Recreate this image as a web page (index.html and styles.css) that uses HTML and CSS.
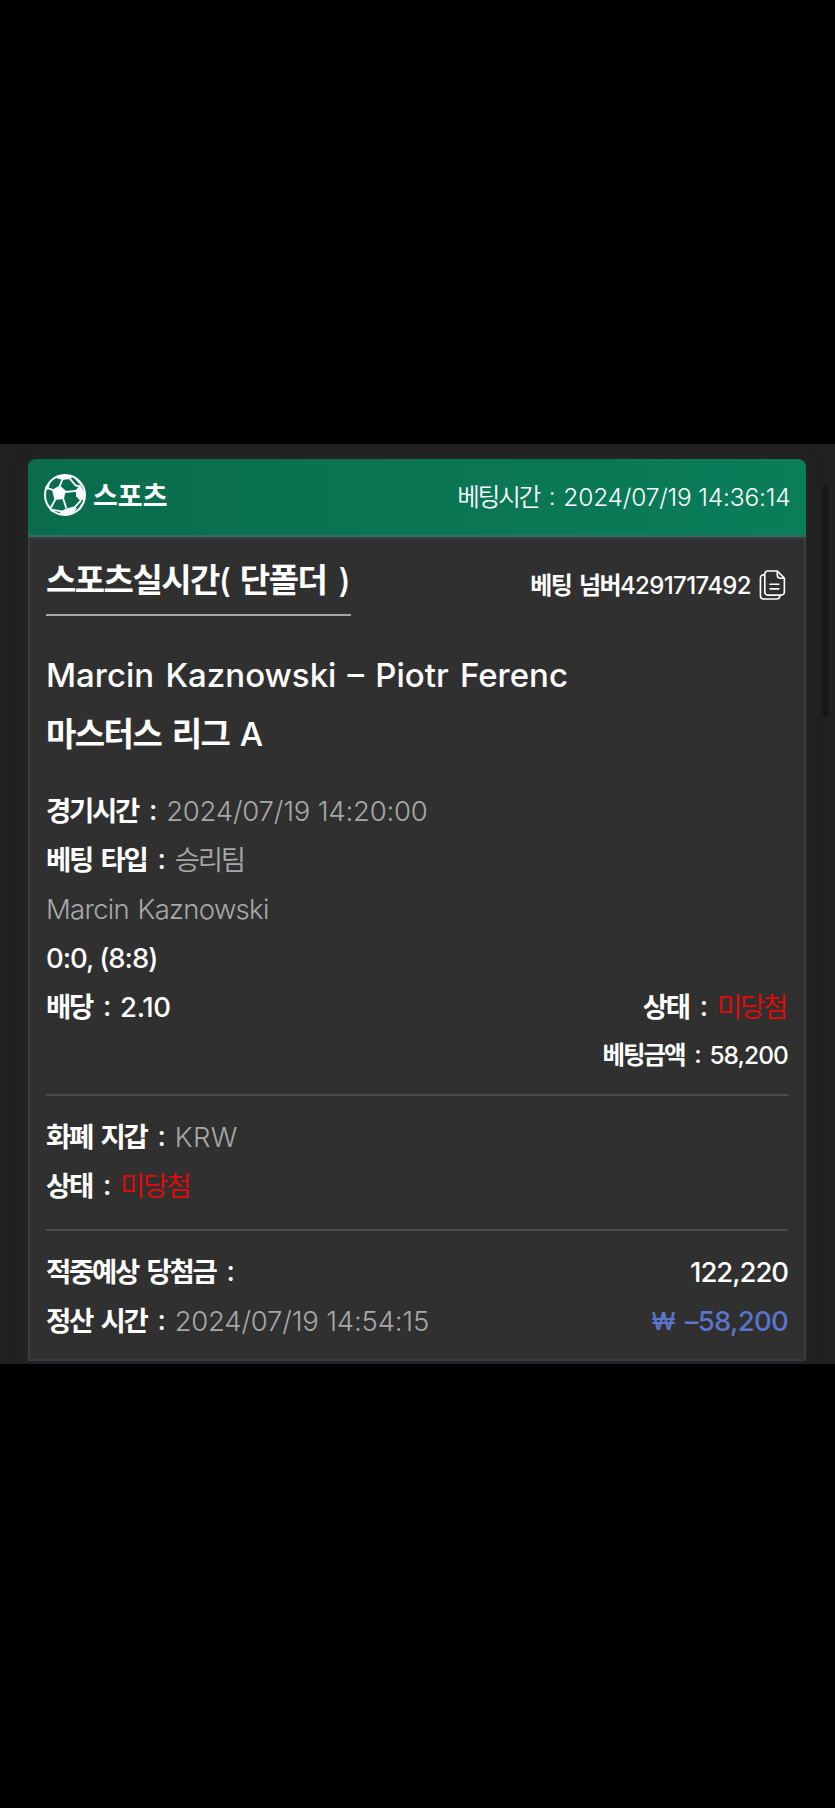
FILE: index.html
```html
<!DOCTYPE html>
<html lang="ko">
<head>
<meta charset="utf-8">
<title>스포츠</title>
<link rel="stylesheet" href="styles.css">
</head>
<body>
<main class="screen">
  <article class="card">
    <header class="card-head">
      <div class="brand">
        <svg class="ball" viewBox="0 0 124 124" aria-hidden="true">
          <circle cx="62" cy="62" r="59" fill="none" stroke="#fff" stroke-width="6"/>
          <g fill="#fff">
            <path d="M24 47 46 34 64 49 59 74 31 77Z"/>
            <path d="M94 47 107 32 121 55 119 74 108 80 95 66Z"/>
            <path d="M30 12 58 2 85 8 76 15 54 18 34 11Z"/>
            <path d="M62 103 88 96 97 102 88 114 62 122 44 116Z"/>
            <path d="M2 52 12 44 18 28 5 36Z"/>
            <path d="M6 86 21 98 28 110 44 120 20 110Z"/>
            <path d="M86 8 106 22 112 36 100 24Z"/>
            <path d="M119 76 108 104 98 110 108 92Z"/>
          </g>
          <g fill="none" stroke="#fff" stroke-width="5.500">
            <path d="M54 17 46 37M62 53 96 50M57 74 66 101M33 76 21 98M26 47 10 42M76 14 94 34 106 36M108 79 91 98M26 106 62 112"/>
          </g>
        </svg>
        <span class="brand-name">스포츠</span>
      </div>
      <div class="bet-time"><span class="ko">베팅시간</span><span class="colon">:</span><span class="stamp">2024/07/19 14:36:14</span></div>
    </header>
    <div class="card-body">
      <div class="title-row">
        <h1 class="title"><span class="ko">스포츠실시간</span><span>( </span><span class="ko">단폴더</span><span class="close"> )</span></h1>
        <div class="bet-no">
          <span class="ko">베팅 넘버</span><span class="num">4291717492</span>
          <svg class="copy" viewBox="0 0 28 32" fill="none" stroke="#fff" stroke-width="1.7" stroke-linejoin="round" stroke-linecap="round" aria-hidden="true">
            <path d="M9 1.5H19L26.3 8.8V23.500a3 3 0 0 1-3 3H9a3 3 0 0 1-3-3V4.500a3 3 0 0 1 3-3ZM19 1.700V6a3 3 0 0 0 3 3H26.200M6 5.500H4.500a3 3 0 0 0-3 3V27.500a3 3 0 0 0 3 3H18.500a3 3 0 0 0 3-3V27M11.500 15.200H20.500M11.500 20H20.500"/>
          </svg>
        </div>
      </div>
      <div class="match">
        <p class="players">Marcin Kaznowski – Piotr Ferenc</p>
        <p class="ko league">마스터스 리그 <span class="grade">A</span></p>
      </div>
      <dl class="rows">
        <div><dt class="ko">경기시간</dt><dt class="colon">:</dt><dd class="stamp">2024/07/19 14:20:00</dd></div>
        <div><dt class="ko">베팅 타입</dt><dt class="colon">:</dt><dd class="ko">승리팀</dd></div>
        <div><dd class="pick">Marcin Kaznowski</dd></div>
        <div><dt class="num">0:0, (8:8)</dt></div>
        <div><dt class="ko">배당</dt><dt class="colon">:</dt><dt class="odds">2.10</dt>
          <span class="end status"><span class="ko">상태</span><span class="colon">:</span><span class="ko lost">미당첨</span></span></div>
        <div class="small"><span class="end"><span class="ko">베팅금액</span><span class="colon">:</span><span class="num">58,200</span></span></div>
      </dl>
      <dl class="rows ruled">
        <div><dt class="ko">화폐 지갑</dt><dt class="colon">:</dt><dd class="currency">KRW</dd></div>
        <div><dt class="ko">상태</dt><dt class="colon">:</dt><dd class="ko lost">미당첨</dd></div>
      </dl>
      <dl class="rows ruled">
        <div><dt class="ko">적중예상 당첨금</dt><dt class="colon">:</dt><dt class="end num">122,220</dt></div>
        <div><dt class="ko">정산 시간</dt><dt class="colon">:</dt><dd class="stamp">2024/07/19 14:54:15</dd><dt class="end loss"><span class="won">₩</span><span class="minus">–58,200</span></dt></div>
      </dl>
    </div>
  </article>
  <div class="scrollbar"></div>
</main>
</body>
</html>
```
FILE: styles.css
```css
* { box-sizing: border-box; }
body {
  margin: 0;
  min-height: 1808px;
  padding-top: 444px;
  background: #000;
  color: #fff;
  font-family: Inter, "Noto Sans CJK KR", sans-serif;
  font-weight: 500;
}
h1, p, dl, dt, dd { margin: 0; font-weight: inherit; }
.screen {
  position: relative;
  height: 920px;
  padding: 14.5px 29px 0 28px;
  background: #212121;
  overflow: hidden;
}
.ko { font-weight: 600; letter-spacing: -.083em; word-spacing: .14em; }
.num { letter-spacing: -.038em; }
.stamp { letter-spacing: -.007em; }
.card { box-shadow: 0 0 14px rgba(45, 45, 55, .5); border-radius: 8px 8px 0 0; }
.card-head {
  display: flex;
  justify-content: space-between;
  align-items: center;
  height: 78.500px;
  padding: 0 15.500px 0 16px;
  border-bottom: 2px solid #2f6e69;
  border-radius: 8px 8px 0 0;
  background: linear-gradient(90deg, #0a6c4d, #0a7d59);
}
.brand { display: flex; align-items: center; gap: 7px; }
.ball { width: 42px; height: 42px; margin-bottom: 4px; }
.brand-name { font-size: 27px; font-weight: 600; line-height: 40px; }
.bet-time {
  display: flex;
  align-items: baseline;
  font-size: 24.500px;
  font-weight: 300;
  line-height: 40px;
}
.bet-time .ko { font-weight: 350; }
.bet-time .colon { width: 24px; }
.card-body {
  height: 824px;
  padding: 0 16px;
  border: 2px solid #3b3c40;
  background: #303030;
}
.title-row { display: flex; justify-content: space-between; align-items: flex-start; height: 78px; }
.title {
  height: 77px;
  padding-top: 16px;
  border-bottom: 2px solid #a5a5a5;
  font-size: 33px;
  line-height: 50px;
  white-space: pre;
}
.title .ko { letter-spacing: -.047em; }
.close { word-spacing: 3.500px; }
.bet-no {
  display: flex;
  align-items: center;
  height: 60px;
  margin-top: 17px;
  padding-right: 2px;
  font-size: 24px;
  line-height: 40px;
}
.bet-no .ko { letter-spacing: -.066em; }
.bet-no .num { letter-spacing: -.026em; }
.copy { width: 27px; height: 32px; margin: 0 0 2px 8px; }
.match { padding-top: 29px; font-size: 33px; line-height: 58.500px; }
.players { word-spacing: 2.400px; }
.league { letter-spacing: -.047em; word-spacing: .11em; }
.grade { font-weight: 500; }
.rows { padding: 24px 0 14px; font-size: 27.500px; line-height: 49px; }
.rows > div { display: flex; height: 49px; }
.rows dd { color: #a8a8a8; font-weight: 300; }
.rows dd.ko { font-weight: 350; }
.ruled { padding: 17px 0 18px; border-top: 2px solid #4b4b4b; }
.colon { width: 1.020em; padding-left: .080em; text-align: center; transform: translateY(-.050em); }
.pick { letter-spacing: -.7px; word-spacing: 1.500px; }
.odds { letter-spacing: -.4px; }
.currency { letter-spacing: .5px; }
.end { display: flex; margin-left: auto; }
.status { padding-right: 2px; }
.rows .small { height: 48px; font-size: 24.500px; line-height: 47px; }
.rows .lost { color: #e80808; font-weight: 350; }
.loss { color: #5b74cc; }
.won { margin-right: 9px; font-size: 24.500px; }
.minus { letter-spacing: -.7px; }
.scrollbar {
  position: absolute;
  top: 41px;
  right: 6px;
  width: 7px;
  height: 232px;
  border-radius: 4px;
  background: #171717;
}
```
